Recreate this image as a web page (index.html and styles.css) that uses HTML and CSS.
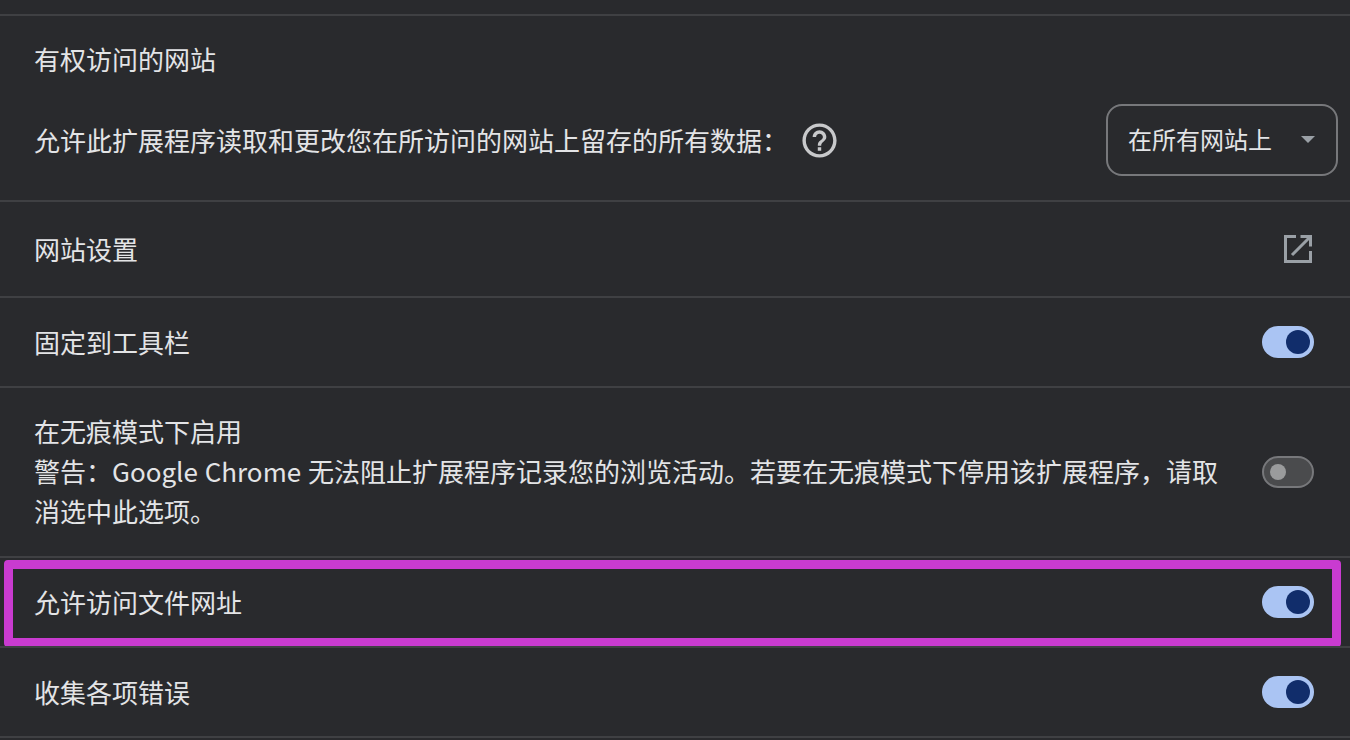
FILE: index.html
```html
<!DOCTYPE html>
<html lang="zh-CN">
<head>
    <meta charset="UTF-8">
    <title>扩展程序详情</title>
    <link rel="stylesheet" href="styles.css">
</head>
<body>
    <div class="details">
        <div class="section access-section">
            <div class="section-title">有权访问的网站</div>
            <div class="row-line">
                <span class="row-label">允许此扩展程序读取和更改您在所访问的网站上留存的所有数据：</span>
                <svg class="help-icon" viewBox="0 0 24 24" width="41" height="41">
                    <path fill="#c8c9cb" d="M11 18h2v-2h-2v2zm1-16C6.48 2 2 6.48 2 12s4.48 10 10 10 10-4.48 10-10S17.52 2 12 2zm0 18c-4.41 0-8-3.59-8-8s3.59-8 8-8 8 3.59 8 8-3.59 8-8 8zm0-14c-2.21 0-4 1.79-4 4h2c0-1.1.9-2 2-2s2 .9 2 2c0 2-3 1.75-3 5h2c0-2.25 3-2.5 3-5 0-2.21-1.79-4-4-4z"/>
                </svg>
                <div class="select-box">
                    <span class="select-value">在所有网站上</span>
                    <span class="select-arrow"></span>
                </div>
            </div>
        </div>

        <div class="section link-row">
            <span class="row-label">网站设置</span>
            <svg class="open-icon" viewBox="0 0 30 30" width="30" height="30">
                <path fill="none" stroke="#9aa0a6" stroke-width="3" d="M13 2.5H2.5v25h25V17"/>
                <path fill="none" stroke="#9aa0a6" stroke-width="3" d="M9 21 26.5 3.5M17.5 2.5h10v10"/>
            </svg>
        </div>

        <div class="section toggle-row">
            <span class="row-label">固定到工具栏</span>
            <span class="toggle on"></span>
        </div>

        <div class="section toggle-row tall-row">
            <div class="toggle-text row-label">
                <div>在无痕模式下启用</div>
                <div>警告：Google Chrome 无法阻止扩展程序记录您的浏览活动。若要在无痕模式下停用该扩展程序，请取消选中此选项。</div>
            </div>
            <span class="toggle"></span>
        </div>

        <div class="section toggle-row">
            <span class="row-label">允许访问文件网址</span>
            <span class="toggle on"></span>
            <div class="highlight-box"></div>
        </div>

        <div class="section toggle-row last-row">
            <span class="row-label">收集各项错误</span>
            <span class="toggle on"></span>
        </div>
    </div>
</body>
</html>
```

FILE: styles.css
```css
body {
    margin: 0;
    background-color: #292a2d;
    color: #e3e4e6;
    font-family: "Noto Sans CJK SC", "Liberation Sans", sans-serif;
    font-size: 26px;
    word-spacing: 1px;
    overflow: hidden;
}

.details {
    padding-top: 14px;
}

.section {
    border-top: 2px solid #3f4043;
    padding: 0 36px 0 34px;
    box-sizing: border-box;
}

.access-section {
    height: 186px;
}

.section-title {
    line-height: 30px;
    padding-top: 28px;
}

.row-line {
    display: flex;
    align-items: center;
    height: 72px;
    margin-top: 30px;
    margin-right: -24px;
}

.help-icon {
    margin-left: 11px;
}

.select-box {
    display: flex;
    align-items: center;
    justify-content: space-between;
    width: 232px;
    height: 72px;
    box-sizing: border-box;
    margin-left: auto;
    padding: 0 21px 0 20px;
    border: 2px solid #77787b;
    border-radius: 16px;
    font-size: 24px;
}

.select-value {
    margin-bottom: 4px;
}

.select-arrow {
    width: 0;
    height: 0;
    margin-top: -1px;
    border-left: 7px solid transparent;
    border-right: 7px solid transparent;
    border-top: 7px solid #9aa0a6;
}

.row-label {
    margin-bottom: 2px;
}

.link-row {
    display: flex;
    align-items: center;
    justify-content: space-between;
    height: 96px;
}

.open-icon {
    margin-right: 1px;
}

.toggle-row {
    display: flex;
    align-items: center;
    justify-content: space-between;
    height: 90px;
    position: relative;
}

.tall-row {
    height: 170px;
}

.last-row {
    height: 92px;
    border-bottom: 2px solid #3f4043;
}

.toggle-text {
    width: 1190px;
    line-height: 40px;
}

.toggle {
    position: relative;
    flex-shrink: 0;
    width: 52px;
    height: 32px;
    box-sizing: border-box;
    border: 2px solid #77787b;
    border-radius: 16px;
    background-color: #4a4b4d;
}

.toggle:before {
    content: "";
    position: absolute;
    left: 6px;
    top: 6px;
    width: 16px;
    height: 16px;
    border-radius: 50%;
    background-color: #9a9b9c;
}

.toggle.on {
    border: none;
    background-color: #aac4f3;
}

.toggle.on:before {
    left: 24px;
    top: 4px;
    width: 24px;
    height: 24px;
    background-color: #112d6b;
}

.highlight-box {
    position: absolute;
    left: 4px;
    right: 9px;
    top: 2px;
    height: 87px;
    box-sizing: border-box;
    border: 9px solid #c93bd0;
    border-radius: 4px;
}
```
